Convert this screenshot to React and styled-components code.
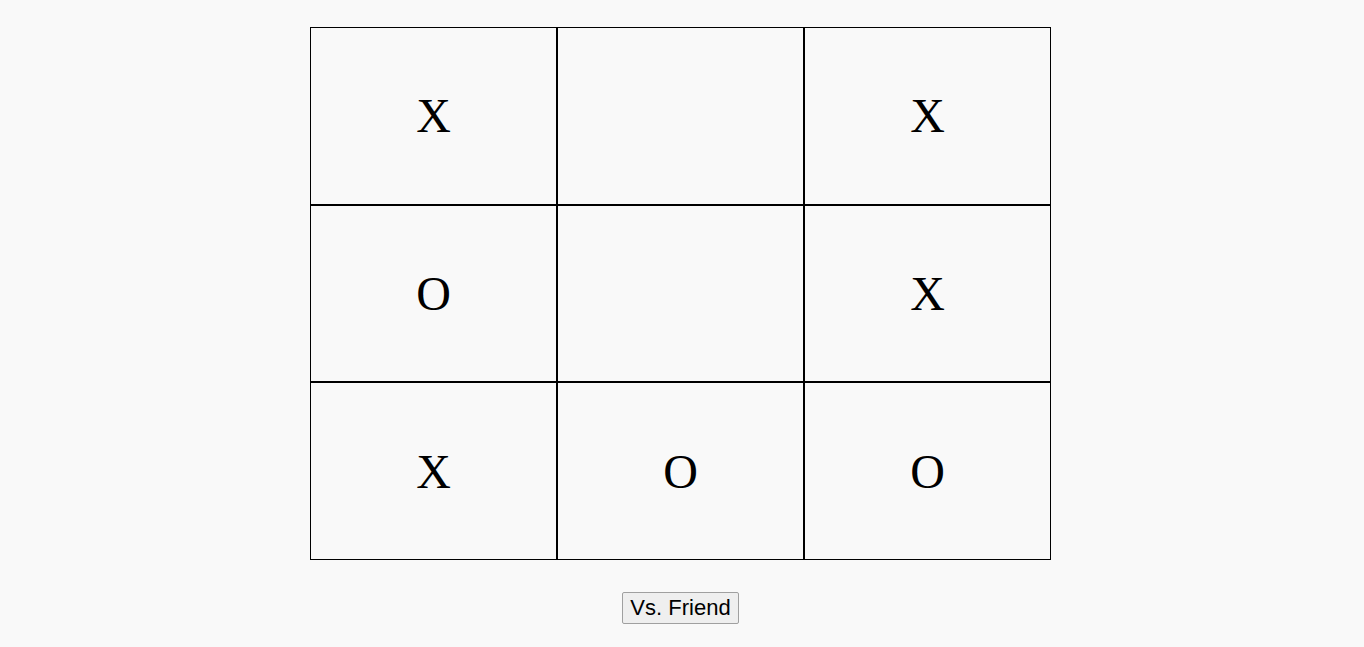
import styled, { createGlobalStyle } from "styled-components";

const GlobalStyle = createGlobalStyle`
  body {
    margin: 0;
    background: #f9f9f9;
    font-family: "Liberation Serif", "Times New Roman", serif;
  }
`;

const Page = styled.div`
  display: flex;
  flex-direction: column;
  align-items: center;
  padding: 27px 3px 0 0;
`;

const Board = styled.div`
  display: grid;
  grid-template-columns: repeat(3, 247px);
  grid-template-rows: repeat(3, 177.67px);
`;

const Cell = styled.div`
  box-sizing: border-box;
  border: 1px solid #000;
  display: flex;
  align-items: center;
  justify-content: center;
  font-size: 48px;
  color: #000;
`;

const Button = styled.button`
  margin-top: 32px;
  height: 32px;
  padding: 0 7px;
  font-family: "Liberation Sans", Arial, sans-serif;
  font-size: 22px;
  color: #000;
  background: #efefef;
  border: 1px solid #a0a0a0;
  border-radius: 2px;
  cursor: pointer;
`;

const cells = ["X", "", "X", "O", "", "X", "X", "O", "O"];

const App = () => {
  return (
    <>
      <GlobalStyle />
      <Page>
        <Board>
          {cells.map((v, i) => (
            <Cell key={i}>{v}</Cell>
          ))}
        </Board>
        <Button>Vs. Friend</Button>
      </Page>
    </>
  );
};

export default App;
